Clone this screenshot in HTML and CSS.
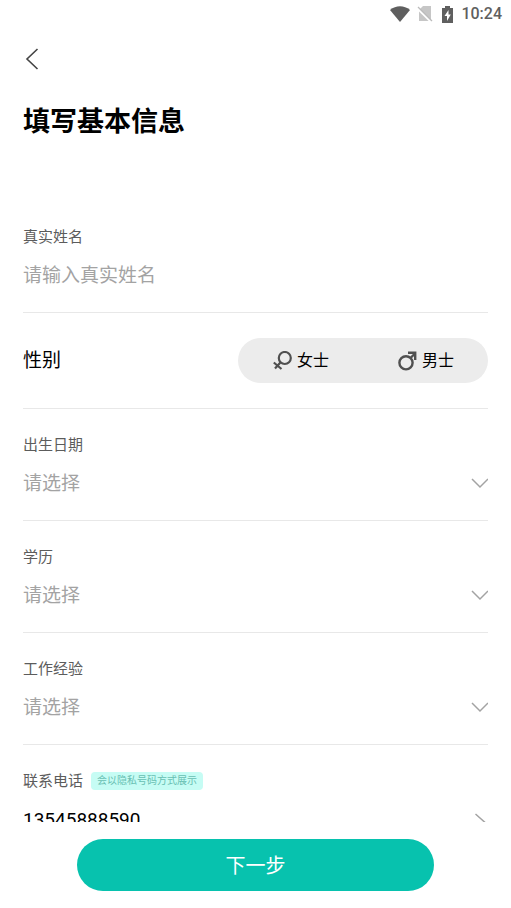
FILE: index.html
```html
<!DOCTYPE html>
<html lang="zh-CN">
<head>
<meta charset="utf-8">
<meta name="viewport" content="width=device-width, initial-scale=1">
<title>填写基本信息</title>
<link rel="stylesheet" href="styles.css">
</head>
<body>
<div class="status-bar">
  <svg class="status-wifi" viewBox="0 0 20 16" width="20" height="16" aria-hidden="true"><path d="M0 4C6-1 14-1 20 4L10 16Z" fill="#5f5f5f"/></svg>
  <svg class="status-sim" viewBox="0 0 16 16" width="16" height="16" aria-hidden="true"><path d="M6 0H14V15H2V4Z" fill="#c6c6c6"/><path d="M0 2L14 16" stroke="#fff" stroke-width="2"/><path d="M1 1L15 15" stroke="#bbb" stroke-width="1.300"/></svg>
  <svg class="status-battery" viewBox="0 0 11 17" width="11" height="17" aria-hidden="true"><path d="M3 0H8V2H11V17H0V2H3Z" fill="#5f5f5f"/><path d="M6.500 4L2.500 10H5V15L8.800 8.500H6.500Z" fill="#fff"/></svg>
  <time class="status-time">10:24</time>
</div>
<main class="content">
  <button class="back" type="button" aria-label="返回">
    <svg viewBox="0 0 14 22" width="14" height="22" aria-hidden="true"><path d="M12.500 1L2 11L12.500 21" fill="none" stroke="#444" stroke-width="1.600"/></svg>
  </button>
  <h1 class="title">填写基本信息</h1>
  <form id="profile" class="form">
    <div class="field">
      <label class="label" for="name">真实姓名</label>
      <input class="value" id="name" type="text" placeholder="请输入真实姓名">
    </div>
    <fieldset class="gender" aria-labelledby="gender-label">
      <span class="gender-label" id="gender-label">性别</span>
      <div class="pill">
        <label class="choice">
          <input class="choice-input" type="radio" name="gender" value="f">
          <svg viewBox="0 0 20 20" width="20" height="20" aria-hidden="true"><g fill="none" stroke="#505050" stroke-width="2.200"><circle cx="12.800" cy="7" r="6"/><path d="M8.600 11.200L3 17.500M1.800 11.500L9.500 18"/></g></svg>
          <span>女士</span>
        </label>
        <label class="choice">
          <input class="choice-input" type="radio" name="gender" value="m">
          <svg viewBox="0 0 20 20" width="20" height="20" aria-hidden="true"><g fill="none" stroke="#505050" stroke-width="2.400"><circle cx="9" cy="11.800" r="6.600"/><path d="M13.500 7L18 2.500M11 1.800H18.200V9"/></g></svg>
          <span>男士</span>
        </label>
      </div>
    </fieldset>
    <div class="field">
      <label class="label" for="birth">出生日期</label>
      <div class="picker">
        <select class="value value-empty" id="birth"><option>请选择</option></select>
        <svg class="chevron" viewBox="0 0 18 12" width="18" height="12" aria-hidden="true"><path d="M2 1L10 9L18 1"/></svg>
      </div>
    </div>
    <div class="field">
      <label class="label" for="education">学历</label>
      <div class="picker">
        <select class="value value-empty" id="education"><option>请选择</option></select>
        <svg class="chevron" viewBox="0 0 18 12" width="18" height="12" aria-hidden="true"><path d="M2 1L10 9L18 1"/></svg>
      </div>
    </div>
    <div class="field">
      <label class="label" for="experience">工作经验</label>
      <div class="picker">
        <select class="value value-empty" id="experience"><option>请选择</option></select>
        <svg class="chevron" viewBox="0 0 18 12" width="18" height="12" aria-hidden="true"><path d="M2 1L10 9L18 1"/></svg>
      </div>
    </div>
    <div class="field">
      <div class="label-row">
        <label class="label" for="phone">联系电话</label>
        <span class="tag">会以隐私号码方式展示</span>
      </div>
      <div class="picker">
        <input class="value" id="phone" type="tel" value="13545888590">
        <svg class="chevron" viewBox="0 0 14 12" width="14" height="12" overflow="visible" aria-hidden="true"><path d="M1.500 0L10.500 8L1.500 16"/></svg>
      </div>
    </div>
  </form>
</main>
<footer class="footer">
  <button class="next" type="submit" form="profile">下一步</button>
</footer>
</body>
</html>
```
FILE: styles.css
```css
* {
  box-sizing: border-box;
}

body {
  display: flex;
  flex-direction: column;
  height: 100vh;
  margin: 0;
  background: #fff;
  color: #000;
  font-family: Roboto, "Noto Sans CJK SC", sans-serif;
}

button,
input,
select {
  font-family: inherit;
}

.status-bar {
  display: flex;
  flex: none;
  align-items: center;
  justify-content: flex-end;
  height: 28px;
  padding: 0 9px;
}

.status-sim {
  margin-left: 7px;
}

.status-battery {
  margin-left: 9px;
}

.status-time {
  margin-left: 8px;
  color: #5f5f5f;
  font-size: 16px;
  font-weight: 500;
  line-height: 20px;
}

.content {
  flex: 1;
  min-height: 0;
  padding: 20px 23px 0;
  overflow-y: auto;
  scrollbar-width: none;
}

.back {
  display: block;
  padding: 0 2px;
  border: 0;
  background: none;
}

.back svg {
  display: block;
}

.title {
  margin: 32px 0 59px;
  font-size: 27px;
  font-weight: 700;
  line-height: 40px;
}

.field {
  padding: 26px 0 22px;
  border-bottom: 1px solid #e8e8e8;
}

.label {
  display: block;
  color: #5c5c5c;
  font-size: 15px;
  line-height: 20px;
}

.label-row {
  display: flex;
  align-items: center;
  gap: 8px;
}

.tag {
  padding: 0 6px;
  border-radius: 4px;
  background: #c6fcf4;
  color: #68bfb2;
  font-size: 10px;
  line-height: 18px;
}

.value {
  display: block;
  width: 100%;
  height: 28px;
  margin: 15px 0 0;
  padding: 0;
  border: 0;
  outline: 0;
  appearance: none;
  background: none;
  color: #000;
  font-size: 19px;
  line-height: 28px;
}

.value::placeholder,
.value-empty {
  color: #a3a3a3;
}

.picker {
  display: grid;
  align-items: end;
}

.picker > * {
  grid-area: 1 / 1;
}

.chevron {
  justify-self: end;
  margin-bottom: 8px;
  fill: none;
  stroke: #a3a3a3;
  stroke-width: 1.5;
  pointer-events: none;
}

.gender {
  display: flex;
  align-items: center;
  justify-content: space-between;
  min-width: 0;
  margin: 0;
  padding: 25px 0;
  border: 0;
  border-bottom: 1px solid #e8e8e8;
}

.gender-label {
  font-size: 19px;
  line-height: 28px;
}

.pill {
  display: grid;
  grid-template-columns: 1fr 1fr;
  width: 250px;
  height: 45px;
  border-radius: 23px;
  background: #ececec;
}

.choice {
  position: relative;
  display: flex;
  align-items: center;
  justify-content: center;
  gap: 5px;
  font-size: 16px;
  line-height: 24px;
}

.choice-input {
  position: absolute;
  inset: 0;
  width: 100%;
  height: 100%;
  margin: 0;
  opacity: 0;
}

.footer {
  display: flex;
  flex: none;
  justify-content: center;
  padding: 17px;
}

.next {
  width: 75%;
  height: 52px;
  padding: 0 0 2px;
  border: 0;
  border-radius: 26px;
  background: #07c2ae;
  color: #fff;
  font-size: 20px;
}
```
